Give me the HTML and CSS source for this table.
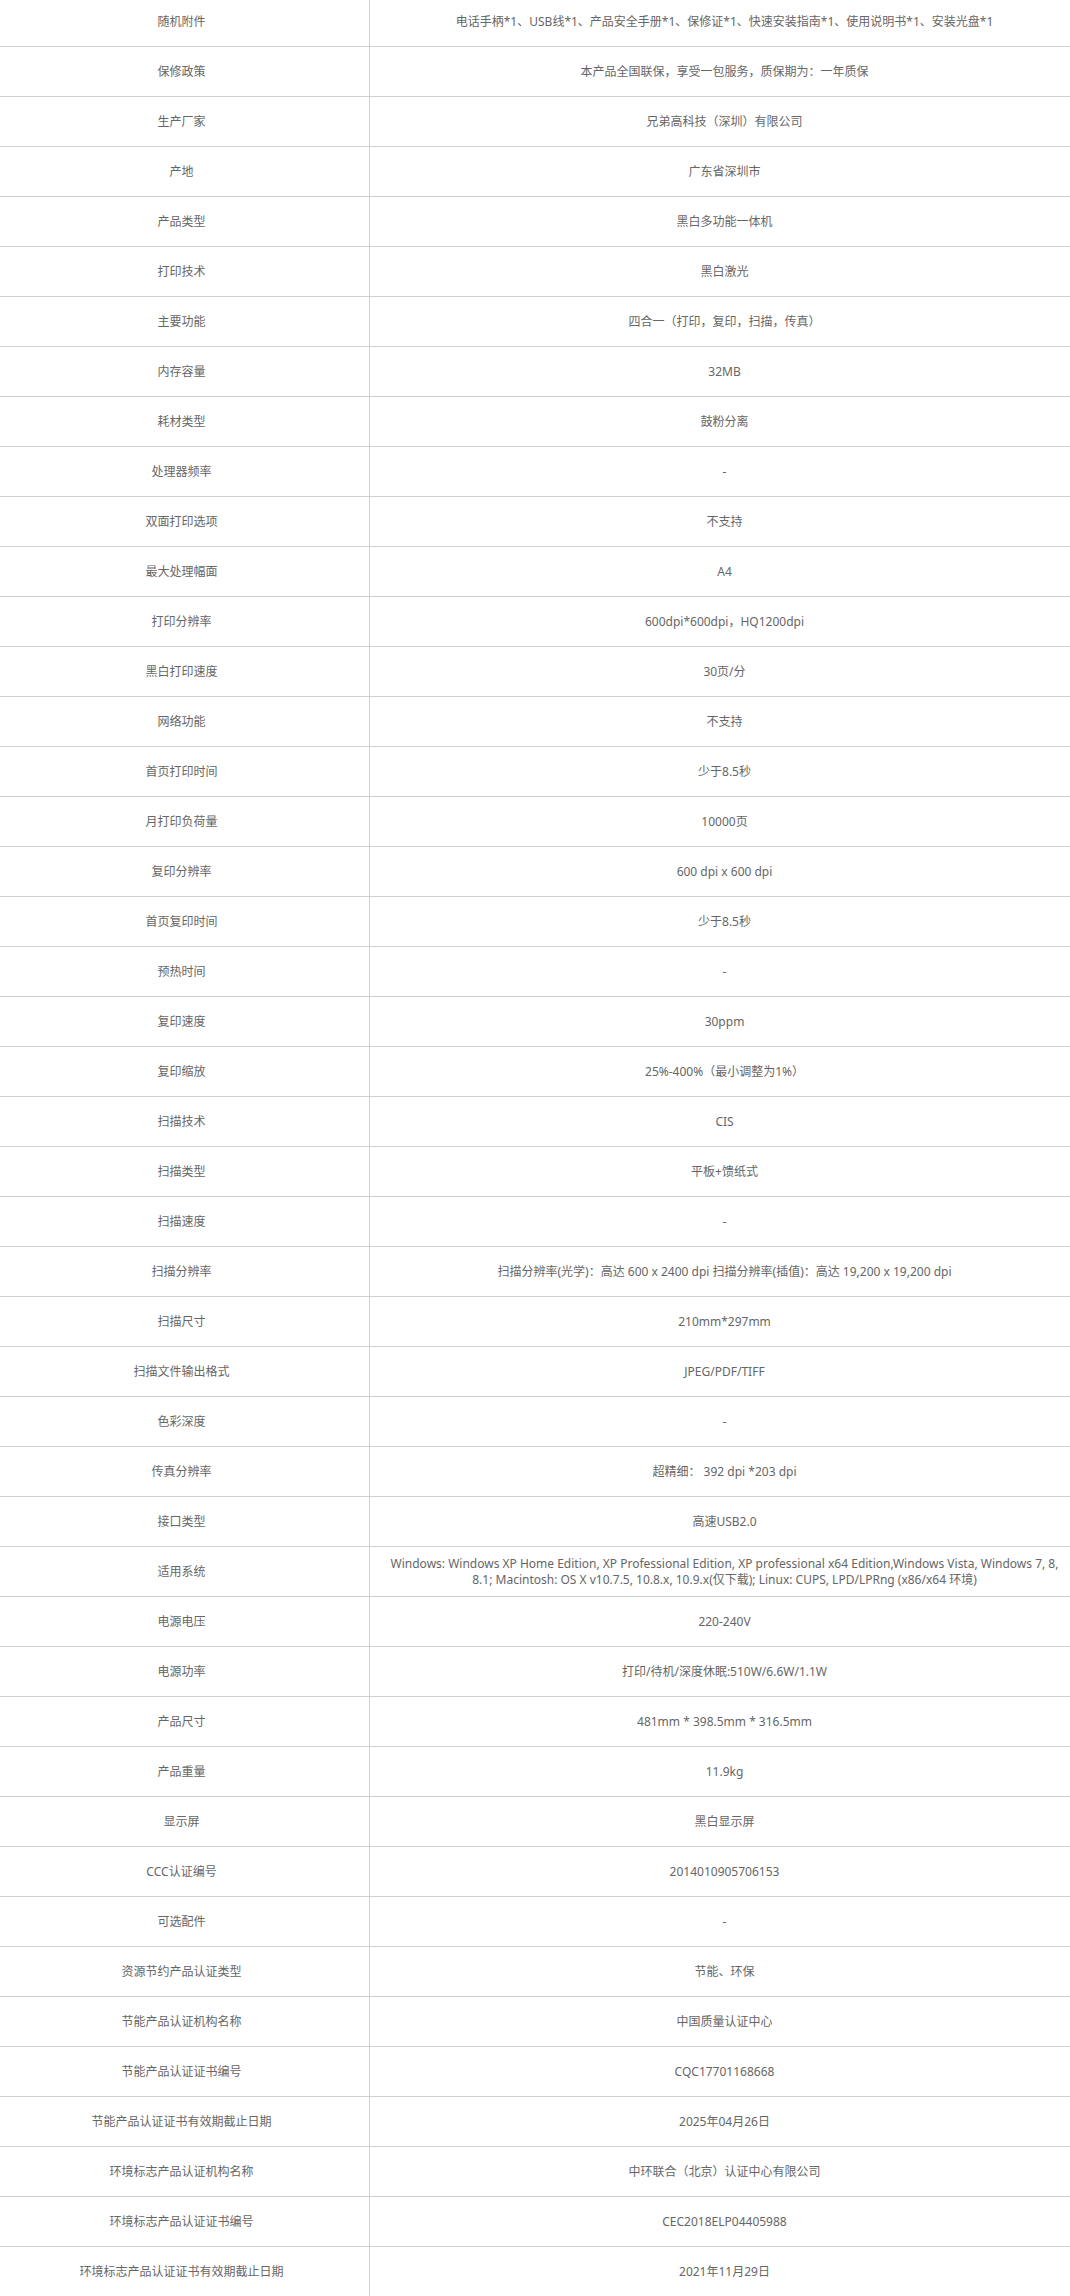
FILE: index.html
```html
<!DOCTYPE html>
<html lang="zh-CN">
<head>
<meta charset="utf-8">
<title>参数</title>
<link rel="stylesheet" href="styles.css">
</head>
<body>
<table class="spec">
<colgroup><col class="c-name"><col class="c-val"></colgroup>
<tbody>
<tr><td>随机附件</td><td>电话手柄*1、USB线*1、产品安全手册*1、保修证*1、快速安装指南*1、使用说明书*1、安装光盘*1</td></tr>
<tr><td>保修政策</td><td>本产品全国联保，享受一包服务，质保期为：一年质保</td></tr>
<tr><td>生产厂家</td><td>兄弟高科技（深圳）有限公司</td></tr>
<tr><td>产地</td><td>广东省深圳市</td></tr>
<tr><td>产品类型</td><td>黑白多功能一体机</td></tr>
<tr><td>打印技术</td><td>黑白激光</td></tr>
<tr><td>主要功能</td><td>四合一（打印，复印，扫描，传真）</td></tr>
<tr><td>内存容量</td><td>32MB</td></tr>
<tr><td>耗材类型</td><td>鼓粉分离</td></tr>
<tr><td>处理器频率</td><td>-</td></tr>
<tr><td>双面打印选项</td><td>不支持</td></tr>
<tr><td>最大处理幅面</td><td>A4</td></tr>
<tr><td>打印分辨率</td><td>600dpi*600dpi，HQ1200dpi</td></tr>
<tr><td>黑白打印速度</td><td>30页/分</td></tr>
<tr><td>网络功能</td><td>不支持</td></tr>
<tr><td>首页打印时间</td><td>少于8.5秒</td></tr>
<tr><td>月打印负荷量</td><td>10000页</td></tr>
<tr><td>复印分辨率</td><td>600 dpi x 600 dpi</td></tr>
<tr><td>首页复印时间</td><td>少于8.5秒</td></tr>
<tr><td>预热时间</td><td>-</td></tr>
<tr><td>复印速度</td><td>30ppm</td></tr>
<tr><td>复印缩放</td><td>25%-400%（最小调整为1%）</td></tr>
<tr><td>扫描技术</td><td>CIS</td></tr>
<tr><td>扫描类型</td><td>平板+馈纸式</td></tr>
<tr><td>扫描速度</td><td>-</td></tr>
<tr><td>扫描分辨率</td><td>扫描分辨率(光学)：高达 600 x 2400 dpi 扫描分辨率(插值)：高达 19,200 x 19,200 dpi</td></tr>
<tr><td>扫描尺寸</td><td>210mm*297mm</td></tr>
<tr><td>扫描文件输出格式</td><td>JPEG/PDF/TIFF</td></tr>
<tr><td>色彩深度</td><td>-</td></tr>
<tr><td>传真分辨率</td><td>超精细： 392 dpi *203 dpi</td></tr>
<tr><td>接口类型</td><td>高速USB2.0</td></tr>
<tr><td>适用系统</td><td>Windows: Windows XP Home Edition, XP Professional Edition, XP professional x64 Edition,Windows Vista, Windows 7, 8, 8.1; Macintosh: OS X v10.7.5, 10.8.x, 10.9.x(仅下载); Linux: CUPS, LPD/LPRng (x86/x64 环境)</td></tr>
<tr><td>电源电压</td><td>220-240V</td></tr>
<tr><td>电源功率</td><td>打印/待机/深度休眠:510W/6.6W/1.1W</td></tr>
<tr><td>产品尺寸</td><td>481mm * 398.5mm * 316.5mm</td></tr>
<tr><td>产品重量</td><td>11.9kg</td></tr>
<tr><td>显示屏</td><td>黑白显示屏</td></tr>
<tr><td>CCC认证编号</td><td>2014010905706153</td></tr>
<tr><td>可选配件</td><td>-</td></tr>
<tr><td>资源节约产品认证类型</td><td>节能、环保</td></tr>
<tr><td>节能产品认证机构名称</td><td>中国质量认证中心</td></tr>
<tr><td>节能产品认证证书编号</td><td>CQC17701168668</td></tr>
<tr><td>节能产品认证证书有效期截止日期</td><td>2025年04月26日</td></tr>
<tr><td>环境标志产品认证机构名称</td><td>中环联合（北京）认证中心有限公司</td></tr>
<tr><td>环境标志产品认证证书编号</td><td>CEC2018ELP04405988</td></tr>
<tr><td>环境标志产品认证证书有效期截止日期</td><td>2021年11月29日</td></tr>
</tbody>
</table>
</body>
</html>
```
FILE: styles.css
```css
html, body {
  margin: 0;
  padding: 0;
  background: #fff;
  overflow: hidden;
}

body {
  font-family: "Noto Sans", "Noto Sans CJK SC", sans-serif;
  font-size: 12px;
  color: #666;
}

.spec {
  border-collapse: collapse;
  table-layout: fixed;
  width: 1086px;
  margin: -4px 0 0 -7px;
}

.c-name { width: 376px; }
.c-val { width: 710px; }

.spec td {
  border: 1px solid #d0d0d0;
  height: 50px;
  padding: 0 9px;
  box-sizing: border-box;
  text-align: center;
  vertical-align: middle;
  line-height: 16px;
}
```
